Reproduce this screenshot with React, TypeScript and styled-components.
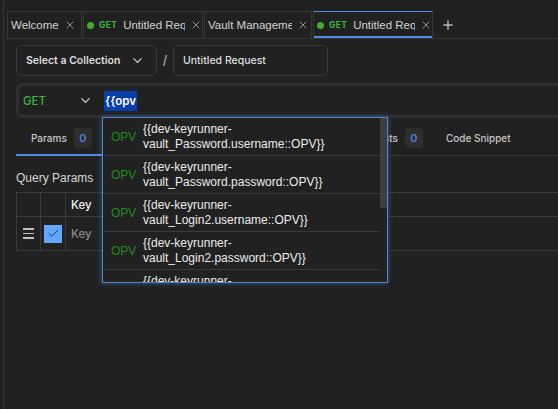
import React from 'react';
import styled, { createGlobalStyle } from 'styled-components';
import { ChevronDown, X, Plus, Check } from 'lucide-react';

const GlobalStyle = createGlobalStyle`
  html, body {
    margin: 0;
    padding: 0;
    background: #212121;
    overflow: hidden;
  }
  * {
    box-sizing: border-box;
  }
`;

const UI_FONT = `Inter, "Noto Sans", sans-serif`;
const SYS_FONT = `"Liberation Sans", Arial, sans-serif`;

const Shell = styled.div`
  display: flex;
  height: 100vh;
  width: 760px;
  background: #212121;
  color: #dcdcdc;
`;

const SideEdge = styled.div`
  width: 4px;
  flex: none;
  border-right: 1px solid #363636;
`;

const Main = styled.div`
  flex: 1;
  display: flex;
  flex-direction: column;
  padding-top: 11px;
`;

const TabBar = styled.div`
  display: flex;
  align-items: stretch;
  height: 28px;
  padding-left: 3px;
  border-bottom: 1px solid #363636;
`;

const Tab = styled.div<{ $active?: boolean; $width: number }>`
  display: flex;
  align-items: center;
  width: ${({ $width }) => $width}px;
  margin-right: 1px;
  padding: 0 0 0 3px;
  border: 1px solid #363636;
  border-bottom: none;
  border-top-color: ${({ $active }) => ($active ? '#4a90e2' : '#363636')};
  box-shadow: ${({ $active }) => ($active ? 'inset 0 -2px 0 #4a90e2' : 'none')};
  font-family: ${SYS_FONT};
  font-size: 11.5px;
  color: #d2d2d2;
  overflow: hidden;
  white-space: nowrap;
`;

const TabLabel = styled.span<{ $max?: number }>`
  max-width: ${({ $max }) => ($max ? `${$max}px` : 'none')};
  overflow: hidden;
  white-space: nowrap;
`;

const Dot = styled.span`
  width: 7px;
  height: 7px;
  border-radius: 50%;
  background: #3fae2e;
  margin: 0 5px 0 0;
  flex: none;
`;

const TabMethod = styled.span`
  font-family: ${UI_FONT};
  font-size: 8.5px;
  font-weight: 700;
  color: #3cb43c;
  margin-right: 6px;
  letter-spacing: 0.3px;
`;

const CloseIcon = styled(X)`
  flex: none;
  color: #b5b5b5;
  margin-left: 5px;
`;

const AddButton = styled.div`
  display: flex;
  align-items: center;
  padding: 0 6px 0 7px;
  color: #b8b8b8;
`;

const Content = styled.div`
  display: flex;
  flex-direction: column;
  padding: 6px 0 0 12px;
`;

const CollectionRow = styled.div`
  display: flex;
  align-items: center;
  gap: 6px;
  height: 31px;
`;

const FieldBox = styled.div<{ $width: number; $strong?: boolean }>`
  display: flex;
  align-items: center;
  justify-content: space-between;
  width: ${({ $width }) => $width}px;
  height: 31px;
  padding: 0 11px 0 9px;
  border: 1px solid #3a3a3a;
  border-radius: 6px;
  font-family: ${UI_FONT};
  font-size: 10.5px;
  font-weight: ${({ $strong }) => ($strong ? 600 : 500)};
  color: #dedede;
`;

const Slash = styled.span`
  font-family: ${SYS_FONT};
  font-size: 14px;
  color: #bdbdbd;
`;

const UrlWrap = styled.div`
  position: relative;
  margin-top: 7px;
`;

const UrlBar = styled.div`
  display: flex;
  align-items: center;
  height: 35px;
  border: 3px solid #2f2f2f;
  border-radius: 7px;
  padding-left: 4px;
`;

const MethodSelect = styled.div`
  display: flex;
  align-items: center;
  justify-content: space-between;
  width: 76px;
  padding-right: 6px;
  font-family: ${UI_FONT};
  font-size: 11.5px;
  font-weight: 500;
  color: #3cb43c;
`;

const UrlText = styled.span`
  margin-left: 5px;
  padding: 3px 1px;
  background: #0a3da8;
  font-family: ${UI_FONT};
  font-size: 11.5px;
  font-weight: 600;
  color: #ffffff;
`;

const Suggest = styled.div`
  position: absolute;
  top: 34px;
  left: 86px;
  display: flex;
  width: 286px;
  height: 166px;
  background: #212121;
  border: 1px solid #4f86c8;
  box-shadow: 0 0 5px rgba(80, 140, 220, 0.55);
  z-index: 5;
`;

const SuggestList = styled.div`
  flex: 1;
  overflow: hidden;
`;

const ScrollTrack = styled.div`
  width: 7px;
  flex: none;
  display: flex;
  flex-direction: column;
`;

const ScrollThumb = styled.div`
  height: 90px;
  background: #3e3e3e;
`;

const SuggestItem = styled.div`
  display: flex;
  align-items: center;
  min-height: 37px;
  padding: 4px 0 4px 8px;
  border-bottom: 1px solid #3a3a3a;
`;

const ItemTag = styled.span`
  width: 32px;
  flex: none;
  font-family: ${SYS_FONT};
  font-size: 12px;
  color: #1f8a1f;
  padding-top: 1px;
`;

const ItemText = styled.span`
  font-family: ${SYS_FONT};
  font-size: 12px;
  line-height: 14.5px;
  color: #ececec;
`;

const SectionTabs = styled.div`
  display: flex;
  align-items: stretch;
  height: 38px;
  padding-top: 4px;
  border-bottom: 1px solid #363636;
`;

const SectionTab = styled.div<{ $active?: boolean; $left?: number }>`
  display: flex;
  align-items: center;
  gap: 7px;
  padding: 0 12px 0 ${({ $left }) => $left ?? 15}px;
  margin-bottom: -1px;
  border-bottom: 2px solid ${({ $active }) => ($active ? '#4a90e2' : 'transparent')};
  font-family: ${UI_FONT};
  font-size: 10px;
  font-weight: 500;
  color: #c8c8c8;
  white-space: nowrap;
`;

const Count = styled.span`
  display: inline-flex;
  align-items: center;
  justify-content: center;
  width: 18px;
  height: 20px;
  border-radius: 4px;
  background: #2e2e2e;
  font-family: ${UI_FONT};
  font-size: 11px;
  color: #4d8ff5;
`;

const SectionTitle = styled.div`
  padding: 15px 0 7px 0;
  font-family: ${SYS_FONT};
  font-size: 12px;
  color: #d8d8d8;
`;

const Table = styled.div`
  display: grid;
  grid-template-columns: 24px 25px 1fr;
  border-top: 1px solid #3a3a3a;
  border-left: 1px solid #3a3a3a;
`;

const Cell = styled.div<{ $height: number }>`
  display: flex;
  align-items: center;
  justify-content: center;
  height: ${({ $height }) => $height}px;
  border-right: 1px solid #3a3a3a;
  border-bottom: 1px solid #3a3a3a;
`;

const KeyCell = styled(Cell)<{ $muted?: boolean }>`
  justify-content: flex-start;
  padding-left: 5px;
  font-family: ${UI_FONT};
  font-size: 11.5px;
  font-weight: 500;
  color: ${({ $muted }) => ($muted ? '#8a8a8a' : '#f0f0f0')};
`;

const DragIcon = styled.div`
  display: flex;
  flex-direction: column;
  gap: 3px;
  span {
    width: 11px;
    height: 1.5px;
    background: #c0c0c0;
  }
`;

const CheckBox = styled.div`
  display: flex;
  align-items: center;
  justify-content: center;
  width: 18px;
  height: 18px;
  background: #62a6ff;
  color: #1b2a40;
`;

const tabs = [
  { label: 'Welcome', width: 75 },
  { label: 'Untitled Request', width: 120, method: 'GET', max: 64 },
  { label: 'Vault Management', width: 108, max: 84 },
  { label: 'Untitled Request', width: 120, method: 'GET', max: 64, active: true },
];

const suggestions = [
  '{{dev-keyrunner-vault_Password.username::OPV}}',
  '{{dev-keyrunner-vault_Password.password::OPV}}',
  '{{dev-keyrunner-vault_Login2.username::OPV}}',
  '{{dev-keyrunner-vault_Login2.password::OPV}}',
  '{{dev-keyrunner-vault_Login.username::OPV}}',
  '{{dev-keyrunner-vault_Login.password::OPV}}',
];

export default function App() {
  return (
    <>
      <GlobalStyle />
      <Shell>
        <SideEdge />
        <Main>
          <TabBar>
            {tabs.map((t, i) => (
              <Tab key={i} $width={t.width} $active={t.active}>
                {t.method && <Dot />}
                {t.method && <TabMethod>{t.method}</TabMethod>}
                <TabLabel $max={t.max}>{t.label}</TabLabel>
                <CloseIcon size={12} strokeWidth={1.5} />
              </Tab>
            ))}
            <AddButton>
              <Plus size={14} strokeWidth={2.5} />
            </AddButton>
          </TabBar>

          <Content>
            <CollectionRow>
              <FieldBox $width={141} $strong>
                Select a Collection
                <ChevronDown size={15} color="#cfcfcf" />
              </FieldBox>
              <Slash>/</Slash>
              <FieldBox $width={155}>Untitled Request</FieldBox>
            </CollectionRow>

            <UrlWrap>
              <UrlBar>
                <MethodSelect>
                  GET
                  <ChevronDown size={15} color="#cfcfcf" />
                </MethodSelect>
                <UrlText>{'{{opv'}</UrlText>
              </UrlBar>
              <Suggest>
                <SuggestList>
                  {suggestions.map((s, i) => (
                    <SuggestItem key={i}>
                      <ItemTag>OPV</ItemTag>
                      <ItemText>{s}</ItemText>
                    </SuggestItem>
                  ))}
                </SuggestList>
                <ScrollTrack>
                  <ScrollThumb />
                </ScrollTrack>
              </Suggest>
            </UrlWrap>

            <SectionTabs>
              <SectionTab $active>
                Params <Count>0</Count>
              </SectionTab>
              <SectionTab>Authorization</SectionTab>
              <SectionTab>
                Headers <Count>0</Count>
              </SectionTab>
              <SectionTab>Body</SectionTab>
              <SectionTab $left={33}>
                Tests <Count>0</Count>
              </SectionTab>
              <SectionTab $left={11}>Code Snippet</SectionTab>
            </SectionTabs>

            <SectionTitle>Query Params</SectionTitle>
            <Table>
              <Cell $height={24} />
              <Cell $height={24} />
              <KeyCell $height={24}>Key</KeyCell>
              <Cell $height={34}>
                <DragIcon>
                  <span />
                  <span />
                  <span />
                </DragIcon>
              </Cell>
              <Cell $height={34}>
                <CheckBox>
                  <Check size={13} strokeWidth={1.5} />
                </CheckBox>
              </Cell>
              <KeyCell $height={34} $muted>
                Key
              </KeyCell>
            </Table>
          </Content>
        </Main>
      </Shell>
    </>
  );
}
